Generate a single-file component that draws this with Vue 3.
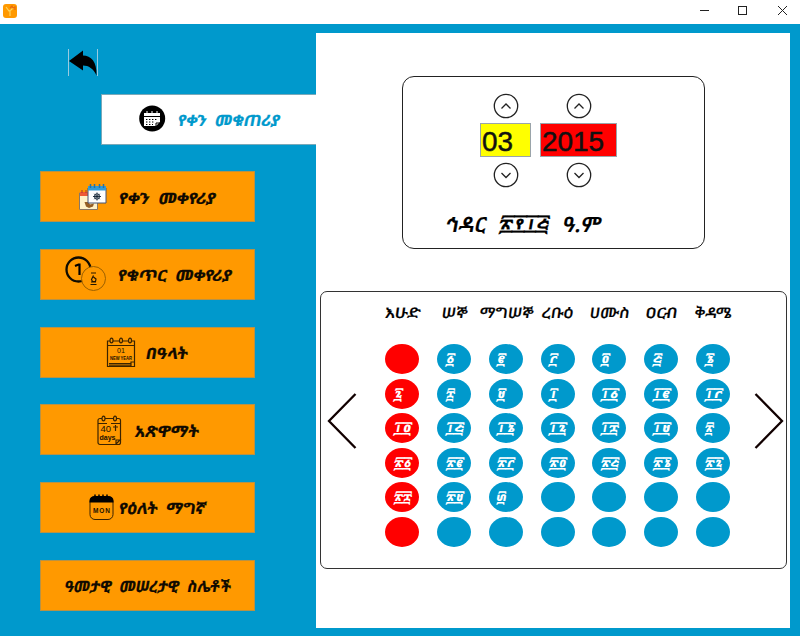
<script setup>
const menu = [
  { id: 'calendar', icon: 'disc', label: 'የቀን መቁጠሪያ', pad: 37, iw: 27, gap: 11, w: 102, active: true },
  { id: 'convert', icon: 'pair', label: 'የቀን መቀየሪያ', pad: 37, iw: 30, gap: 10, w: 97 },
  { id: 'number', icon: 'coins', label: 'የቁጥር መቀየሪያ', pad: 24, iw: 42, gap: 10, w: 114 },
  { id: 'feast', icon: 'newyear', label: 'በዓላት', pad: 66, iw: 30, gap: 8, w: 42 },
  { id: 'fast', icon: 'fasting', label: 'አጽዋማት', pad: 56, iw: 26, gap: 11, w: 64 },
  { id: 'weekday', icon: 'monday', label: 'የዕለት ማግኛ', pad: 48, iw: 26, gap: 3, w: 87 },
  { id: 'yearly', icon: '', label: 'ዓመታዊ መሠረታዊ ስሌቶች', pad: 23, iw: 0, gap: 0, w: 166 }
]
const weekdays = [
  { t: 'እሁድ', w: 36 }, { t: 'ሠኞ', w: 26 }, { t: 'ማግሠኞ', w: 54 }, { t: 'ረቡዕ', w: 32 },
  { t: 'ሀሙስ', w: 40 }, { t: 'ዐርብ', w: 32 }, { t: 'ቅዳሜ', w: 37 }
]
const units = ['', '፩', '፪', '፫', '፬', '፭', '፮', '፯', '፰', '፱']
const tens = ['', '፲', '፳', '፴']
const days = Array.from({ length: 42 }, (_, i) => (i >= 1 && i <= 30 ? tens[Math.floor(i / 10)] + units[i % 10] : ''))
</script>

<template>
  <div class="window">
    <header class="titlebar">
      <svg class="app-icon" width="14" height="14" viewBox="0 0 14 14">
        <rect width="14" height="14" rx="3" fill="#f90" />
        <path d="M3 3l3 4 2-1 3-3M7 7v5" stroke="#ffd45b" stroke-width="1.2" fill="none" />
        <path d="M7 4l2-2 1 2 2-1v3" stroke="#e96a10" stroke-width="1.3" fill="none" />
      </svg>
      <svg class="controls" width="90" height="12" viewBox="0 0 90 12" fill="none" stroke="#222" stroke-width="1">
        <path d="M0 5.500h9" />
        <rect x="38.500" y="1.500" width="8" height="8" />
        <path d="M78 1l9 9M87 1l-9 9" />
      </svg>
    </header>
    <div class="body">
      <aside class="sidebar">
        <button class="back">
          <svg width="30" height="28" viewBox="0 0 30 28">
            <path d="M.5 0v27M29.500 0v27" stroke="#9acbe0" />
            <path d="M1 12L15 1.500v5c8 0 14 6 13.500 20-3-7-8-10-13.500-10v5z" fill="#000" />
          </svg>
        </button>
        <nav class="menu">
          <button v-for="m in menu" :key="m.id" class="item" :class="{ active: m.active }" :style="{ paddingLeft: m.pad + 'px', gap: m.gap + 'px' }">
            <svg v-if="m.icon" class="icon" :width="m.iw" height="36" :viewBox="`0 0 ${m.iw} 36`">
              <g v-if="m.icon === 'disc'">
                <circle cx="13.200" cy="17.500" r="13" fill="#000" />
                <path d="M5 12h16v3H5zM5 16h16v5l-4 4H5z" fill="#fff" />
                <path d="M8 10v3M13 10v3M18 10v3" stroke="#fff" />
                <path d="M7 18.500h12M7 21h9M7 23.500h7" stroke="#000" stroke-dasharray="1.400 1.600" />
                <path d="M17 25v-3h4" fill="none" stroke="#000" />
              </g>
              <g v-else-if="m.icon === 'pair'">
                <path d="M1.500 14h18v16.500h-18z" fill="#fff2c8" stroke="#876" />
                <path d="M2 13h10v4H2z" fill="#ef5a35" />
                <path d="M4 11v3M8 11v3" stroke="#a33" />
                <path d="M6.500 23l1.500 4.500 3 1.500 4-1.500 1-3-4 1-2-2.500z" fill="#945d24" />
                <path d="M10 9h18v15H10z" fill="#fff" stroke="#457" />
                <path d="M10 7h18v4.500H10z" fill="#359bd5" />
                <path d="M12.500 5v4M16.500 5v4M21.500 5v4M25.500 5v4" stroke="#2672a4" stroke-width="1.500" />
                <path d="M19 13.500v8M15 17.500h8M16.300 14.800l5.400 5.400M21.700 14.800l-5.400 5.400" stroke="#123" stroke-width=".9" />
                <circle cx="19" cy="17.500" r="2.700" fill="none" stroke="#123" stroke-width=".8" />
              </g>
              <g v-else-if="m.icon === 'coins'">
                <circle cx="13.500" cy="13.500" r="12" fill="none" stroke="#100c00" stroke-width="2.300" />
                <path d="M10 10l3.500-1.500h1v10.500" fill="none" stroke="#000" stroke-width="2.200" />
                <circle cx="28.500" cy="22.500" r="12" fill="#f90" stroke="#9b6000" />
                <path d="M26 17h5M25.500 28.500h6M28.500 19.500l-2 4 1 2h3l.500-2.500-2.500-2M26 26h5" fill="none" stroke="#241600" stroke-width="1.200" />
              </g>
              <g v-else-if="m.icon === 'newyear'" fill="none" stroke="#3a2300" stroke-width="1.200">
                <path d="M6 7h6M16 7h5M25 7h2.500v25.500h-27V7H3" />
                <path d="M1 11.500h26M2 29.500h22M2 31.200h22M24 32v-4h3" />
                <ellipse cx="4.500" cy="6.500" rx="1.500" ry="2.300" /><ellipse cx="14" cy="6.500" rx="1.500" ry="2.300" /><ellipse cx="23" cy="6.500" rx="1.500" ry="2.300" />
                <text class="tiny" x="10" y="18.500" textLength="8" lengthAdjust="spacingAndGlyphs">01</text>
                <text class="micro" x="3" y="25.500" textLength="22" lengthAdjust="spacingAndGlyphs">NEW YEAR</text>
              </g>
              <g v-else-if="m.icon === 'fasting'" fill="none" stroke="#3a2300" stroke-width="1.200">
                <rect x="1" y="6.500" width="22.500" height="26" rx="2" />
                <path d="M1 11.500h9M14 11.500h9M18.500 13v6M16 15h5M19 32v-4h4l-4 4" />
                <ellipse cx="6.500" cy="6.500" rx="1.500" ry="2.300" fill="#f90" /><ellipse cx="18" cy="6.500" rx="1.500" ry="2.300" fill="#f90" />
                <text class="forty" x="3.500" y="19.500" textLength="10.500" lengthAdjust="spacingAndGlyphs">40</text>
                <text class="days-txt" x="2.500" y="28.300" textLength="16" lengthAdjust="spacingAndGlyphs">days</text>
              </g>
              <g v-else>
                <rect x="1" y="7.500" width="23" height="23" rx="5" fill="none" stroke="#3a2300" />
                <path d="M.5 13.500v-1.500q0-5 6-5h12q6 0 6 5v1.500z" />
                <path d="M6 5.500v3M10 5.500v3M14 5.500v3M18 5.500v3" stroke="#000" stroke-width="1.500" />
                <text class="mon" x="4" y="23.500" textLength="17">MON</text>
              </g>
            </svg>
            <svg class="label" :width="m.w" height="28">
              <text x="0" y="0" :textLength="m.w" lengthAdjust="spacingAndGlyphs" transform="translate(0 20.5) skewX(-10)">{{ m.label }}</text>
            </svg>
          </button>
        </nav>
      </aside>
      <main class="content">
        <section class="picker">
          <div class="spinners">
            <div class="spinner">
              <svg width="26" height="26" viewBox="0 0 26 26"><circle cx="13" cy="13" r="11.700" /><path d="M8.500 15.500L13 11l4.500 4.500" /></svg>
              <div class="field month"><svg width="31" height="31"><text x="0" y="26.500" textLength="31" lengthAdjust="spacingAndGlyphs">03</text></svg></div>
              <svg width="26" height="26" viewBox="0 0 26 26"><circle cx="13" cy="13" r="11.700" /><path d="M8.500 11L13 15.500 17.500 11" /></svg>
            </div>
            <div class="spinner">
              <svg width="26" height="26" viewBox="0 0 26 26"><circle cx="13" cy="13" r="11.700" /><path d="M8.500 15.500L13 11l4.500 4.500" /></svg>
              <div class="field year"><svg width="62" height="31"><text x="0" y="26.500" textLength="62" lengthAdjust="spacingAndGlyphs">2015</text></svg></div>
              <svg width="26" height="26" viewBox="0 0 26 26"><circle cx="13" cy="13" r="11.700" /><path d="M8.500 11L13 15.500 17.500 11" /></svg>
            </div>
          </div>
          <svg class="date" width="157" height="34">
            <g transform="translate(0 26) skewX(-10)">
              <text x="-1" y="0" textLength="40" lengthAdjust="spacingAndGlyphs">ኅዳር</text>
              <text x="52" y="0" textLength="50" lengthAdjust="spacingAndGlyphs">፳፻፲፭</text>
              <text x="116" y="0" textLength="38" lengthAdjust="spacingAndGlyphs">ዓ.ም</text>
            </g>
          </svg>
        </section>
        <section class="month-card">
          <svg class="arrow" width="30" height="58" viewBox="0 0 30 58"><path d="M28.500 2L2 29l26.500 27" /></svg>
          <div class="calendar">
            <div class="weekdays">
              <div v-for="d in weekdays" :key="d.t" class="weekday">
                <svg :width="d.w" height="26"><text x="0" y="0" :textLength="d.w" lengthAdjust="spacingAndGlyphs" transform="translate(0 18.500) skewX(-8)">{{ d.t }}</text></svg>
              </div>
            </div>
            <div class="days">
              <div v-for="(d, i) in days" :key="i" class="day" :class="{ sunday: i % 7 === 0 }">
                <svg v-if="d" :width="d.length * 9" height="22"><text x="0" y="0" :textLength="d.length * 9" lengthAdjust="spacingAndGlyphs" transform="translate(0 17) skewX(-10)">{{ d }}</text></svg>
              </div>
            </div>
          </div>
          <svg class="arrow" width="30" height="58" viewBox="0 0 30 58"><path d="M1.500 2L28 29 1.500 56" /></svg>
        </section>
      </main>
    </div>
  </div>
</template>

<style>
body { margin: 0; overflow: hidden; }
</style>

<style scoped>
* { box-sizing: border-box; }
svg { display: block; flex: none; overflow: visible; }
button { font: inherit; border: 0; padding: 0; background: none; }
.window { width: 800px; height: 636px; display: flex; flex-direction: column; background: #0099cc; font-family: "Noto Sans Ethiopic", "Abyssinica SIL", "Noto Serif Ethiopic", "Liberation Sans", sans-serif; }
.titlebar { height: 24px; flex: none; background: #fff; display: flex; align-items: center; justify-content: space-between; padding: 0 10px 3px 3px; }
.body { flex: 1; display: flex; min-height: 0; }
.sidebar { width: 316px; padding-top: 25px; }
.back { display: block; margin-left: 68px; height: 44.5px; }
.back svg { margin-top: -17px; }
.menu { display: flex; flex-direction: column; gap: 26.7px; padding-left: 40px; }
.item { width: 215px; height: 51px; background: #ff9900; border: 1px solid #b79246; display: flex; align-items: center; flex: none; }
.item.active { background: #fff; border-color: #79a9b9; border-right: 0; align-self: flex-end; }
.label text { font-size: 15.5px; font-weight: 700; fill: #100a00; stroke: #100a00; stroke-width: .25; word-spacing: 4px; }
.active .label text { fill: #0099cc; stroke: #0099cc; }
.tiny, .micro, .forty, .days-txt, .mon { font-family: "Liberation Sans", sans-serif; fill: #1a1000; stroke: none; }
.tiny { font-size: 7px; }
.micro { font-size: 4.8px; font-weight: 700; }
.forty { font-size: 8.5px; }
.days-txt { font-size: 7px; font-weight: 700; }
.mon { font-size: 6.5px; font-weight: 700; }
.content { width: 474px; height: 595px; margin-top: 9px; background: #fff; padding: 43px 3px 0 4px; }
.picker { width: 303px; height: 173px; margin-left: 82px; border: 1px solid #222; border-radius: 12px; padding: 16px 0 0 43px; }
.spinners { display: flex; gap: 9px; margin-left: 34px; }
.spinner { display: flex; flex-direction: column; align-items: center; gap: 6px; }
.spinner > svg { fill: none; stroke: #222; stroke-width: 1.3; }
.field { height: 34px; border: 1px solid #9aa4aa; padding-left: 1px; }
.field text { font: 27px "Liberation Sans", sans-serif; fill: #111; stroke: #111; stroke-width: .5; }
.month { width: 51px; background: #ff0; }
.year { width: 77px; background: #f00; }
.spinner > .field { margin: -2px 0 -1px; }
.date { margin-top: 18px; }
.date text { font-size: 21px; fill: #000; font-weight: 600; stroke: #000; stroke-width: .2; }
.month-card { height: 278px; margin-top: 42px; border: 1px solid #333; border-radius: 7px; display: flex; justify-content: space-between; padding: 6px 2px 0 6px; }
.arrow { margin-top: 94px; fill: none; stroke: #100; stroke-width: 2.3; }
.calendar { width: 363px; padding: 1px 0 0 2px; }
.weekdays { display: grid; grid-template-columns: repeat(7, 51.8px); height: 45px; }
.weekday { display: flex; justify-content: center; }
.weekday text { font-size: 14.5px; font-weight: 500; fill: #000; stroke: #000; stroke-width: .2; }
.days { display: grid; grid-template-columns: repeat(7, 34px); column-gap: 17.8px; row-gap: 4.5px; padding-left: 9.3px; }
.day { width: 34px; height: 30px; border-radius: 50%; background: #0099cc; display: flex; align-items: center; padding-left: 7.5px; }
.day.sunday { background: #f00; }
.day text { font-size: 15px; font-weight: 700; fill: #fff; }
</style>
